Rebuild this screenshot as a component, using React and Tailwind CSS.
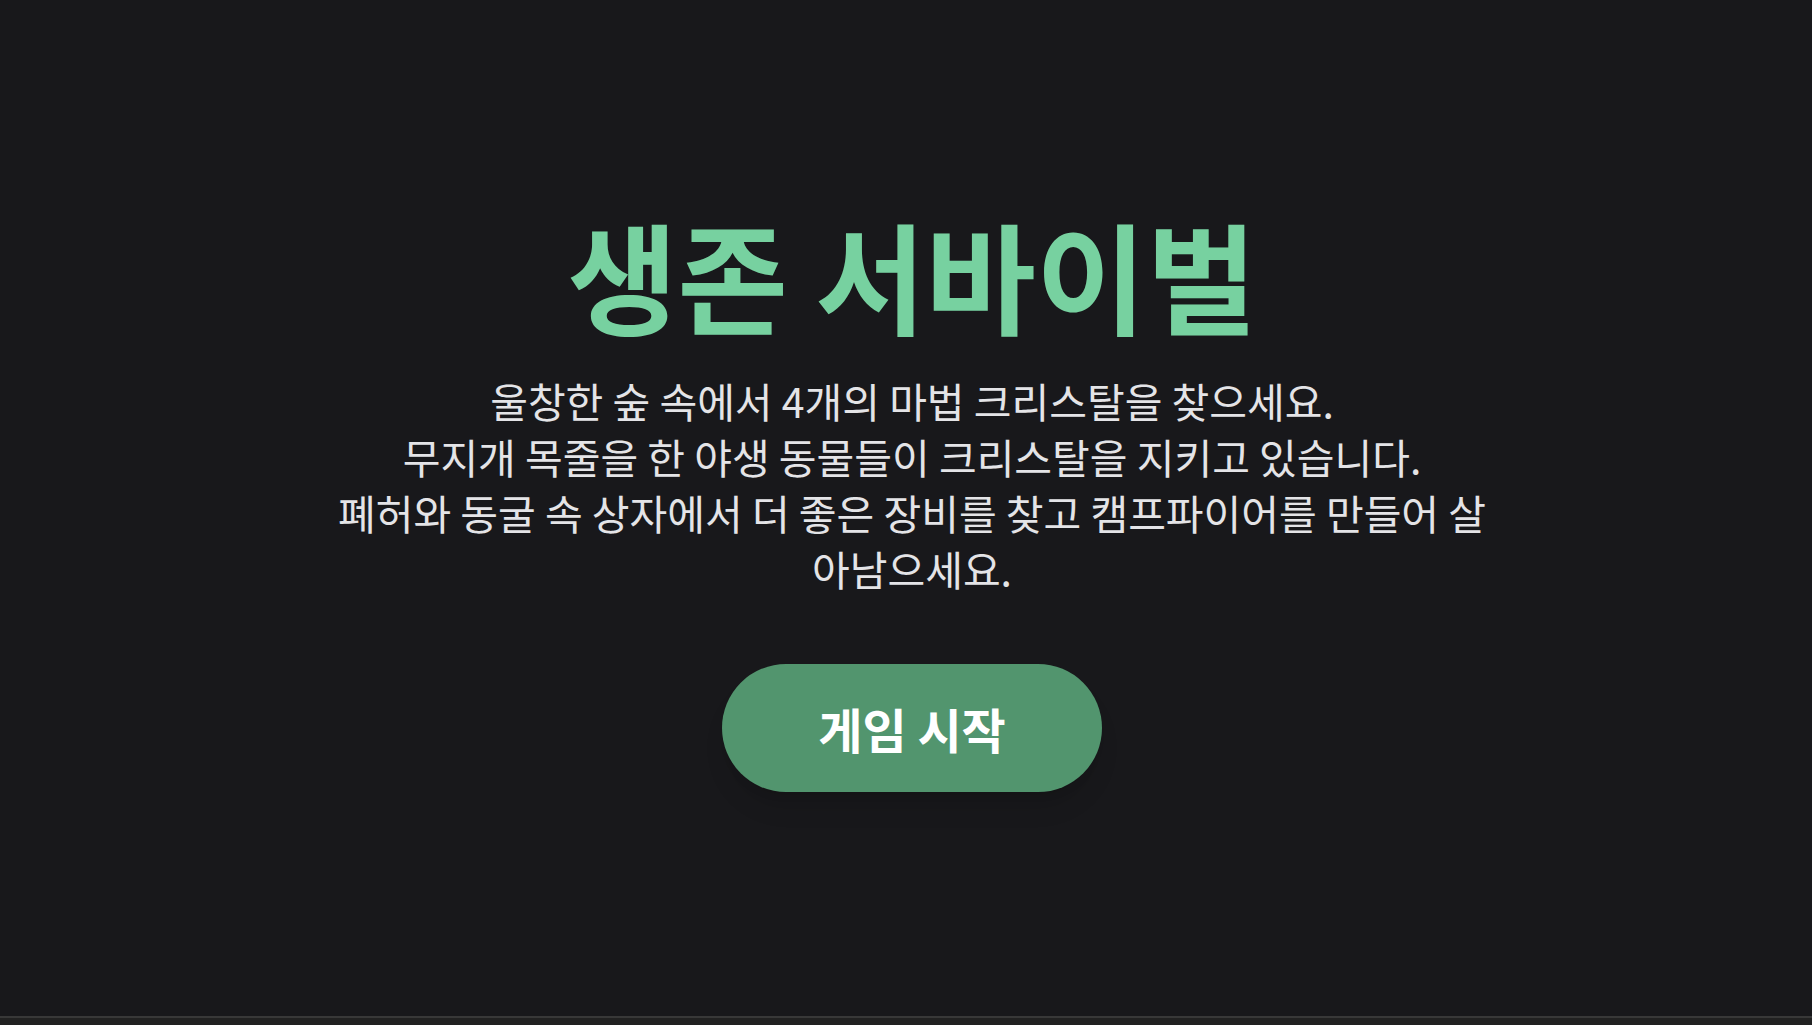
import React from 'react';

const App = () => {
  return (
    <div className="min-h-screen bg-[#18181b] font-['Noto_Sans_CJK_KR','Noto_Sans',sans-serif]">
      <main className="h-[1016px] flex flex-col items-center justify-center pl-[44px] pr-8 pb-[10px] text-center">
        <h1 className="text-[120px] leading-none font-bold text-[#77d1a0] mb-[38px]">생존 서바이벌</h1>
        <p className="max-w-6xl text-[41px] leading-[56px] text-[#e4e4e7] mb-[68px]">
          울창한 숲 속에서 4개의 마법 크리스탈을 찾으세요.
          <br />
          무지개 목줄을 한 야생 동물들이 크리스탈을 지키고 있습니다.
          <br />
          폐허와 동굴 속 상자에서 더 좋은 장비를 찾고 캠프파이어를 만들어 살아남으세요.
        </p>
        <button className="bg-[#52956e] text-white text-5xl leading-none font-bold px-24 py-10 rounded-full shadow-xl">
          게임 시작
        </button>
      </main>
      <footer className="h-[9px] border-t-2 border-[#383838] bg-[#212121]"></footer>
    </div>
  );
};

export default App;
